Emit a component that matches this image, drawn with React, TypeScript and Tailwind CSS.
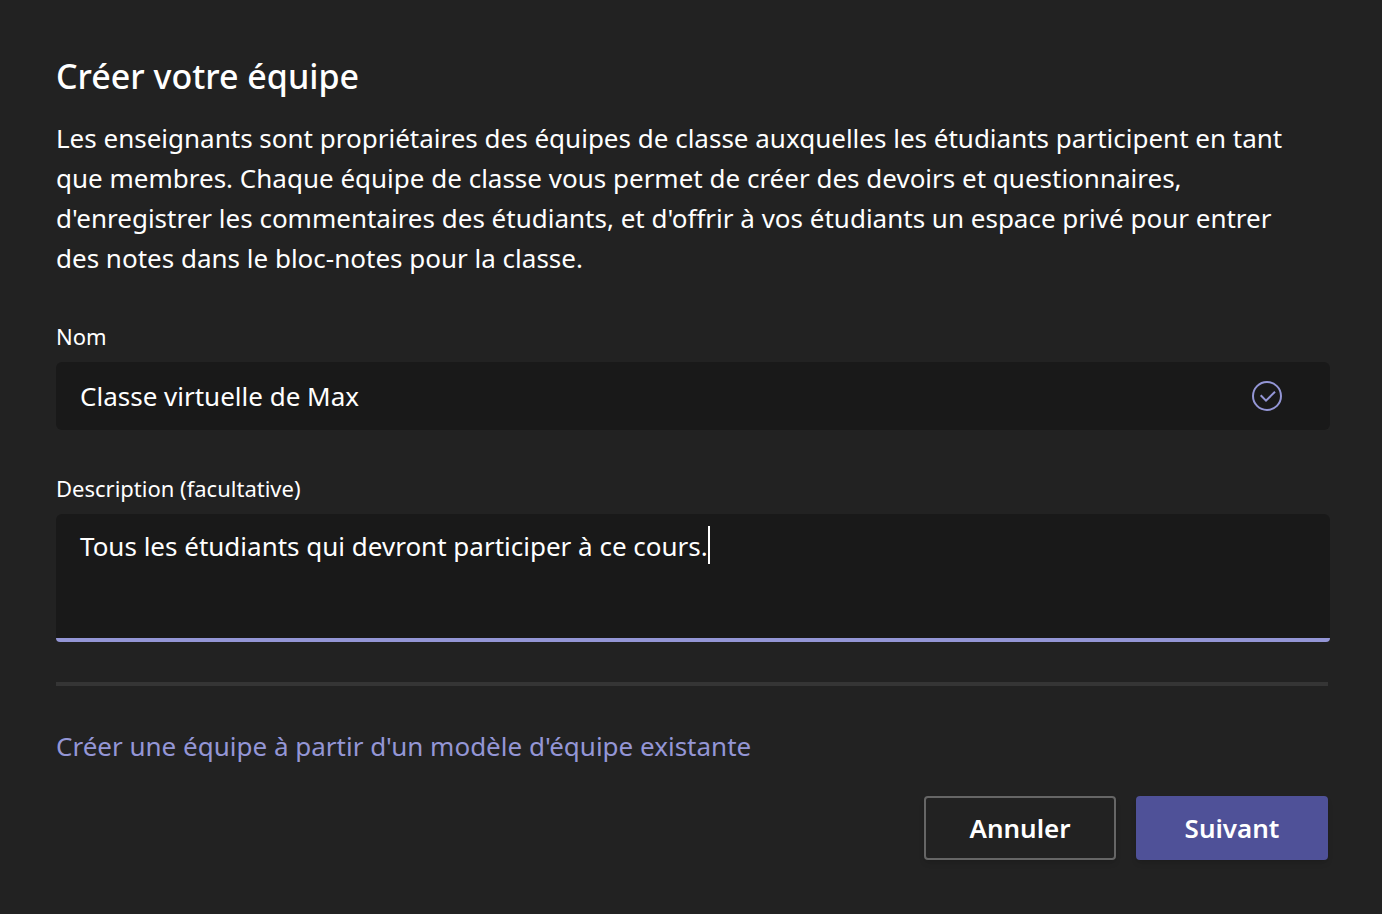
import { useState } from "react";

function CheckIcon() {
  return (
    <svg
      viewBox="0 0 30 30"
      fill="none"
      stroke="currentColor"
      strokeWidth="2"
      className="size-[30px] text-[#9496d6]"
      aria-hidden="true"
    >
      <circle cx="15" cy="15" r="14" />
      <path d="M8.7 14.3 14 19.6l9-8.8" />
    </svg>
  );
}

export default function App() {
  const [name, setName] = useState("Classe virtuelle de Max");
  const [description, setDescription] = useState(
    "Tous les étudiants qui devront participer à ce cours."
  );

  return (
    <main className="min-h-screen bg-[#222222] pt-14 pb-12 pl-14 pr-[54px] font-['Noto_Sans','Open_Sans',sans-serif] text-[26px] leading-10 text-white">
      <h1 className="text-[34px] font-medium">Créer votre équipe</h1>
      <p className="mt-[22px] max-w-[1250px]">
        Les enseignants sont propriétaires des équipes de classe auxquelles les
        étudiants participent en tant que membres. Chaque équipe de classe vous
        permet de créer des devoirs et questionnaires, d'enregistrer les
        commentaires des étudiants, et d'offrir à vos étudiants un espace privé
        pour entrer des notes dans le bloc-notes pour la classe.
      </p>

      <form className="mt-[42px]">
        <label htmlFor="name" className="block text-[22px] leading-8">
          Nom
        </label>
        <div className="mt-2.5 -mr-0.5 flex h-17 items-center rounded-md bg-[#191919] pl-6 pr-12">
          <input
            id="name"
            value={name}
            onChange={(e) => setName(e.target.value)}
            className="min-w-0 flex-1 bg-transparent outline-none"
          />
          <CheckIcon />
        </div>

        <label
          htmlFor="description"
          className="mt-[42px] block text-[22px] leading-8"
        >
          Description (facultative)
        </label>
        <div className="relative mt-2.5 -mr-0.5 flex h-32 flex-col overflow-hidden rounded-t-md rounded-b-sm bg-[#191919]">
          <textarea
            id="description"
            value={description}
            onChange={(e) => setDescription(e.target.value)}
            className="w-full flex-1 resize-none bg-transparent px-6 py-3 caret-transparent outline-none"
          />
          <div className="h-1 bg-[#9496d6]" />
          {/* thick caret placed after a hidden copy of the text */}
          <div
            className="pointer-events-none absolute inset-0 px-6 py-3"
            aria-hidden="true"
          >
            <span className="invisible">{description}</span>
            <span className="inline-block h-[38px] w-[2px] bg-white align-top" />
          </div>
        </div>

        <hr className="mt-10 border-t-4 border-[#353535]" />

        <a href="#modele" className="mt-10 block text-[#9496d6]">
          Créer une équipe à partir d'un modèle d'équipe existante
        </a>

        <div className="mt-[30px] flex justify-end gap-5 font-semibold">
          <button
            type="button"
            className="h-16 w-48 rounded border-2 border-[#666666] shadow-md"
          >
            Annuler
          </button>
          <button
            type="button"
            className="h-16 w-48 rounded bg-[#4f5198] shadow-md"
          >
            Suivant
          </button>
        </div>
      </form>
    </main>
  );
}
